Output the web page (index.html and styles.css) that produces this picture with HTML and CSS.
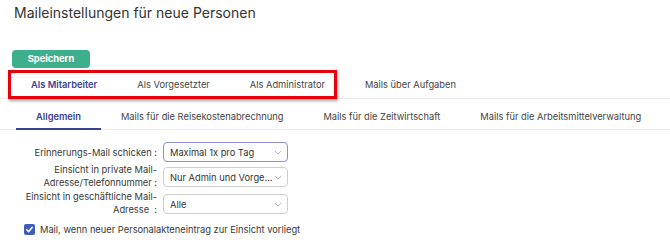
FILE: index.html
```html
<!DOCTYPE html>
<html lang="de">
<head>
<meta charset="utf-8">
<link rel="stylesheet" href="styles.css">
</head>
<body>
<div class="page">
  <h1 class="title">Maileinstellungen für neue Personen</h1>
  <button class="btn-save">Speichern</button>
  <div class="tabs tabs-main">
    <span class="tab active">Als Mitarbeiter</span>
    <span class="tab">Als Vorgesetzter</span>
    <span class="tab">Als Administrator</span>
    <span class="tab">Mails über Aufgaben</span>
  </div>
  <div class="tabs tabs-sub">
    <span class="tab active">Allgemein</span>
    <span class="tab">Mails für die Reisekostenabrechnung</span>
    <span class="tab">Mails für die Zeitwirtschaft</span>
    <span class="tab">Mails für die Arbeitsmittelverwaltung</span>
  </div>
  <div class="form">
    <div class="row">
      <label class="label">Erinnerungs-Mail schicken :</label>
      <div class="select focused"><span>Maximal 1x pro Tag</span><svg class="chev" viewBox="0 0 10 6"><path d="M1 1l4 4 4-4" fill="none" stroke="#9a9a9a" stroke-width="0.9"/></svg></div>
    </div>
    <div class="row">
      <label class="label">Einsicht in private Mail-<br>Adresse/Telefonnummer :</label>
      <div class="select"><span>Nur Admin und Vorge...</span><svg class="chev" viewBox="0 0 10 6"><path d="M1 1l4 4 4-4" fill="none" stroke="#9a9a9a" stroke-width="0.9"/></svg></div>
    </div>
    <div class="row">
      <label class="label">Einsicht in geschäftliche Mail-<br>Adresse &nbsp;:</label>
      <div class="select"><span>Alle</span><svg class="chev" viewBox="0 0 10 6"><path d="M1 1l4 4 4-4" fill="none" stroke="#9a9a9a" stroke-width="0.9"/></svg></div>
    </div>
    <div class="check-row">
      <span class="checkbox"><svg viewBox="0 0 12 12"><path d="M3 6.3l2 2.2 4-5" fill="none" stroke="#fff" stroke-width="1.6" stroke-linecap="round" stroke-linejoin="round"/></svg></span>
      <span>Mail, wenn neuer Personalakteneintrag zur Einsicht vorliegt</span>
    </div>
  </div>
  <div class="highlight"></div>
</div>
</body>
</html>
```

FILE: styles.css
```css
* { box-sizing: border-box; }
html, body { margin: 0; padding: 0; background: #fff; }
body {
  font-family: Inter, "Noto Sans", "Liberation Sans", sans-serif;
  color: #333;
  width: 670px;
  height: 251px;
  overflow: hidden;
}
.page { position: relative; }
.title {
  margin: 0;
  padding: 2px 0 0 14px;
  font-size: 14px;
  font-weight: 400;
  line-height: 22px;
  color: #333;
}
.btn-save {
  display: block;
  margin: 26px 0 0 12px;
  width: 78px;
  height: 18px;
  border: 0;
  border-radius: 4px;
  background: #3eaf8c;
  color: #fff;
  font-family: inherit;
  font-weight: 700;
  font-size: 9.3px;
  line-height: 18px;
  padding: 0;
}
.tabs {
  display: flex;
  border-bottom: 1px solid #ececec;
}
.tab {
  font-size: 9.3px;
  color: #444;
  padding: 0 20px;
  white-space: nowrap;
}
.tabs-main {
  margin-top: 3px;
  padding-left: 11px;
  height: 28px;
  align-items: center;
}
.tabs-sub {
  padding-left: 16px;
  height: 31px;
  align-items: stretch;
}
.tabs-sub .tab {
  display: flex;
  align-items: center;
  padding-top: 5px;
  border-bottom: 2px solid transparent;
  margin-bottom: -1px;
}
.tab.active { color: #3b3f94; font-weight: 600; }
.tabs-sub .tab.active { border-bottom-color: #3b3f94; }
.form {
  padding: 12px 0 0 24px;
  font-size: 9.3px;
  color: #383838;
}
.row {
  display: flex;
  align-items: center;
  margin-bottom: 1px;
}
.label {
  width: 139px;
  flex-shrink: 0;
  text-align: right;
  line-height: 13px;
  padding-right: 6px;
}
.select {
  width: 125px;
  flex-shrink: 0;
  height: 20px;
  border: 1px solid #cfcfcf;
  border-radius: 4px;
  display: flex;
  align-items: center;
  justify-content: space-between;
  padding: 0 5px 0 6px;
  color: #333;
  white-space: nowrap;
}
.row + .row .select { margin-top: 2px; }
.select.focused { border-color: #8c8fd0; }
.chev { width: 8px; height: 5px; }
.check-row {
  display: flex;
  align-items: center;
  gap: 5px;
  margin-top: 7px;
  line-height: 13px;
}
.checkbox {
  width: 11px;
  height: 11px;
  border-radius: 2px;
  background: #3d5db8;
  display: flex;
}
.checkbox svg { width: 11px; height: 11px; }
.highlight {
  position: absolute;
  left: 8px;
  top: 70px;
  width: 329px;
  height: 29px;
  border: 3px solid #e8000b;
  box-shadow: 1px 2px 3px rgba(0,0,0,0.35);
  pointer-events: none;
}
```
